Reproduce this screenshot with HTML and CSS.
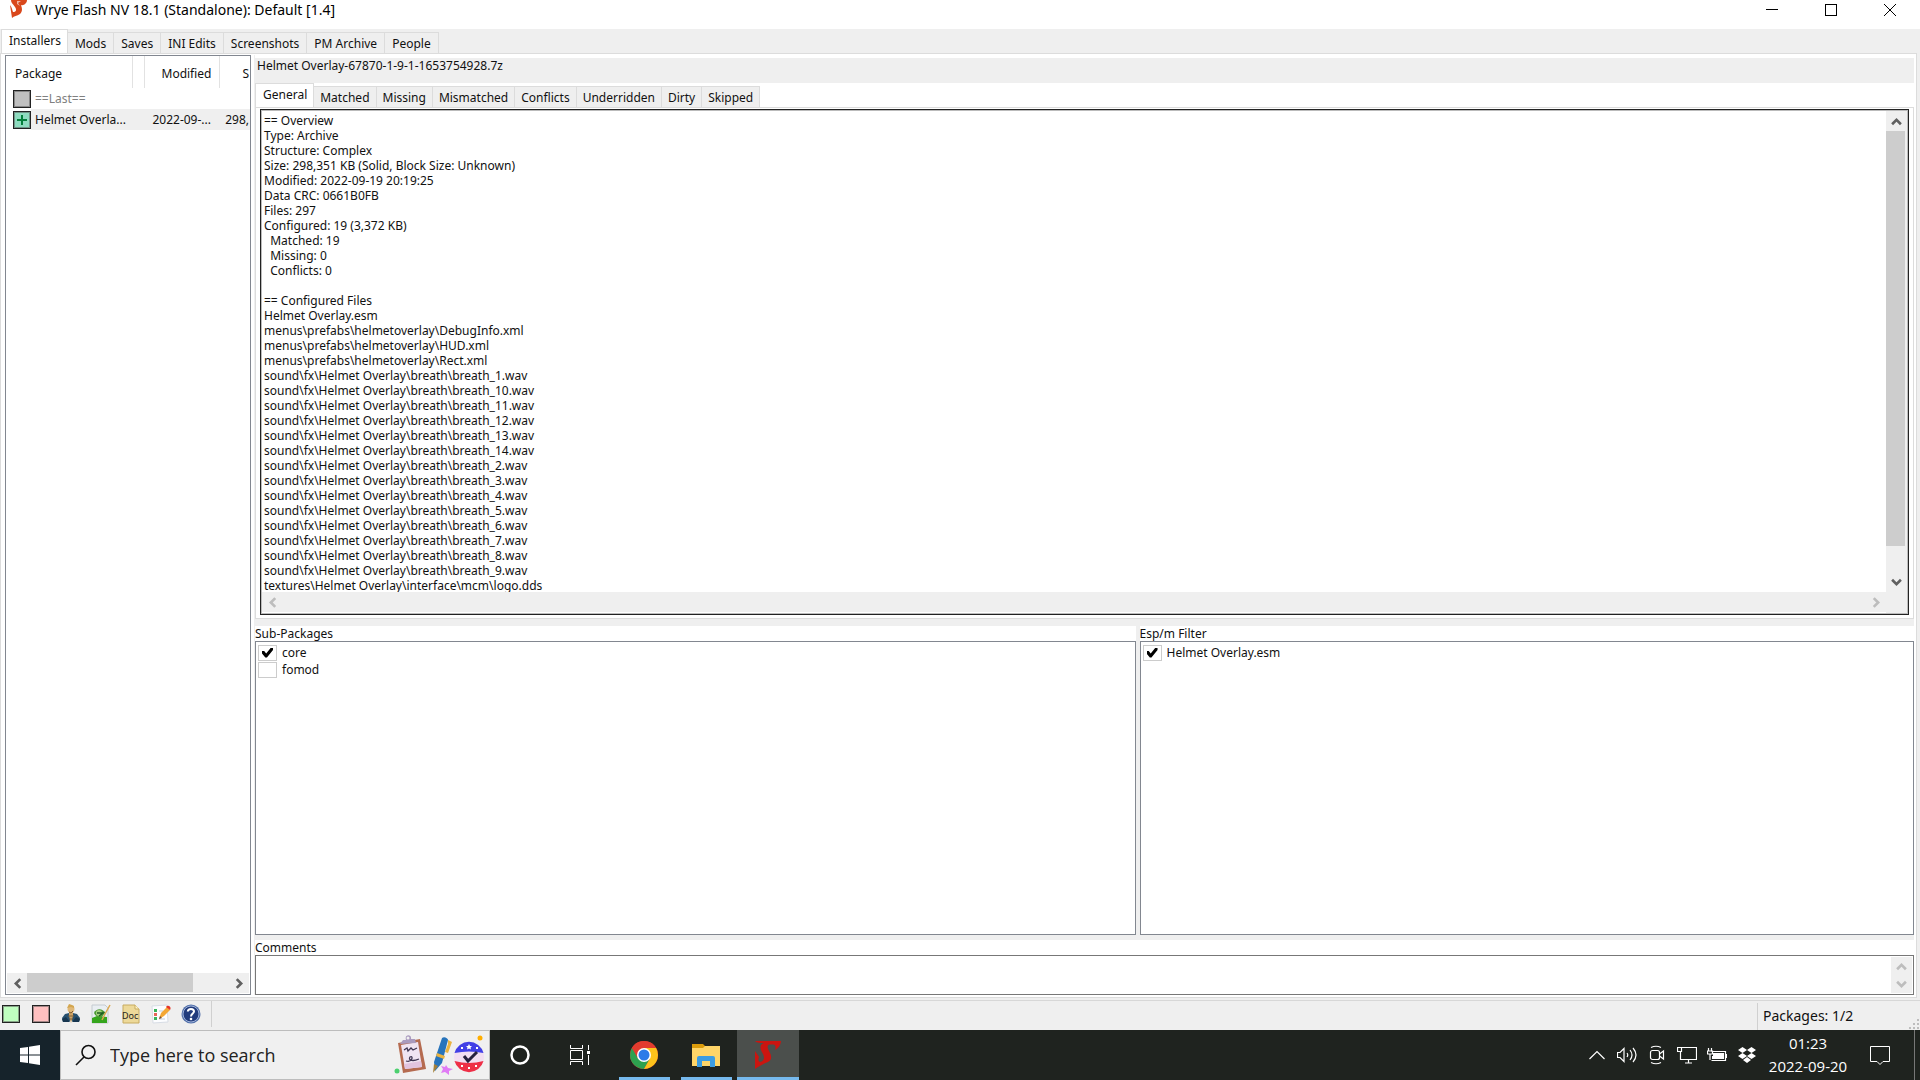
FILE: index.html
```html
<!DOCTYPE html>
<html lang="en">
<head>
<meta charset="utf-8">
<title>Wrye Flash NV 18.1 (Standalone): Default [1.4]</title>
<link rel="stylesheet" href="styles.css">
</head>
<body>
<svg class="defs" aria-hidden="true">
  <symbol id="chev-up" viewBox="0 0 10 10"><path d="M1 7.500 5 3.500 9 7.500" fill="none" stroke="currentColor" stroke-width="2.400"/></symbol>
  <symbol id="chev-down" viewBox="0 0 10 10"><path d="M1 2.500 5 6.500 9 2.500" fill="none" stroke="currentColor" stroke-width="2.400"/></symbol>
  <symbol id="chev-left" viewBox="0 0 10 10"><path d="M7.500 1 3.500 5 7.500 9" fill="none" stroke="currentColor" stroke-width="2.400"/></symbol>
  <symbol id="chev-right" viewBox="0 0 10 10"><path d="M2.500 1 6.500 5 2.500 9" fill="none" stroke="currentColor" stroke-width="2.400"/></symbol>
  <symbol id="wrye" viewBox="0 0 28 30"><path d="M1 1H27C26.500 5 25 8 21 10C22 7 22 5 19 4.500H15C13 5.500 13.500 8 15 11C18 16 18 20 14 22C9 24 5 26 1 29V11L5 17C4 19 4 21 6 22C10 21 11 18 9 14C6 9 5 5 10 3C6 3 3 3 1 1Z"/></symbol>
</svg>

<div class="app">
  <header class="titlebar">
    <svg class="title-icon" viewBox="0 0 18 18"><path fill="#d9481c" d="M1 0H17C17 3 14 6 11 5C12 8 13 11 10 14C7 16 4 16 2 18L0 5C2 7 2 10 3 12C6 12 7 10 5 7C3 4 1 3 1 0Z"/><path fill="#fff" opacity=".6" d="M7 1H11L8 3L10 6L7 4Z"/></svg>
    <h1 class="title">Wrye Flash NV 18.1 (Standalone): Default [1.4]</h1>
    <div class="window-buttons">
      <button class="wbtn" aria-label="Minimize"><svg width="12" height="12"><path d="M0 5.500H12" stroke="#000"/></svg></button>
      <button class="wbtn" aria-label="Maximize"><svg width="12" height="12"><rect x=".5" y=".5" width="11" height="11" fill="none" stroke="#000"/></svg></button>
      <button class="wbtn" aria-label="Close"><svg width="12" height="12"><path d="M0 0 12 12M12 0 0 12" stroke="#000"/></svg></button>
    </div>
  </header>

  <nav class="tabs main-tabs" role="tablist">
    <button class="tab selected" role="tab" aria-selected="true">Installers</button>
    <button class="tab" role="tab">Mods</button>
    <button class="tab" role="tab">Saves</button>
    <button class="tab" role="tab">INI Edits</button>
    <button class="tab" role="tab">Screenshots</button>
    <button class="tab" role="tab">PM Archive</button>
    <button class="tab" role="tab">People</button>
  </nav>

  <main class="workspace">
    <section class="packages">
      <table class="package-table">
        <colgroup><col class="c-name"><col class="c-order"><col class="c-date"><col class="c-size"></colgroup>
        <thead><tr><th class="left">Package</th><th></th><th>Modified</th><th class="size-head">S</th></tr></thead>
        <tbody>
          <tr class="last"><td colspan="2"><div class="pkg"><span class="swatch grey"></span><span>==Last==</span></div></td><td></td><td></td></tr>
          <tr class="current"><td colspan="2"><div class="pkg"><span class="swatch teal"><svg width="10" height="10"><path d="M5 0V10M0 5H10" stroke="#05803c" stroke-width="2"/></svg></span><span class="fill">Helmet Overla...</span></div></td><td class="num">2022-09-...</td><td class="size">298,</td></tr>
        </tbody>
      </table>
      <div class="hbar">
        <button class="sb" aria-label="Scroll left"><svg><use href="#chev-left"/></svg></button>
        <div class="htrack"><div class="hthumb"></div></div>
        <button class="sb" aria-label="Scroll right"><svg><use href="#chev-right"/></svg></button>
      </div>
    </section>

    <section class="details">
      <h2 class="archive-name">Helmet Overlay-67870-1-9-1-1653754928.7z</h2>
      <nav class="tabs sub-tabs" role="tablist">
        <button class="tab selected" role="tab" aria-selected="true">General</button>
        <button class="tab" role="tab">Matched</button>
        <button class="tab" role="tab">Missing</button>
        <button class="tab" role="tab">Mismatched</button>
        <button class="tab" role="tab">Conflicts</button>
        <button class="tab" role="tab">Underridden</button>
        <button class="tab" role="tab">Dirty</button>
        <button class="tab" role="tab">Skipped</button>
      </nav>
      <div class="info-page">
        <div class="info-box">
          <textarea class="info" readonly wrap="off" aria-label="General">== Overview
Type: Archive
Structure: Complex
Size: 298,351 KB (Solid, Block Size: Unknown)
Modified: 2022-09-19 20:19:25
Data CRC: 0661B0FB
Files: 297
Configured: 19 (3,372 KB)
  Matched: 19
  Missing: 0
  Conflicts: 0

== Configured Files
Helmet Overlay.esm
menus\prefabs\helmetoverlay\DebugInfo.xml
menus\prefabs\helmetoverlay\HUD.xml
menus\prefabs\helmetoverlay\Rect.xml
sound\fx\Helmet Overlay\breath\breath_1.wav
sound\fx\Helmet Overlay\breath\breath_10.wav
sound\fx\Helmet Overlay\breath\breath_11.wav
sound\fx\Helmet Overlay\breath\breath_12.wav
sound\fx\Helmet Overlay\breath\breath_13.wav
sound\fx\Helmet Overlay\breath\breath_14.wav
sound\fx\Helmet Overlay\breath\breath_2.wav
sound\fx\Helmet Overlay\breath\breath_3.wav
sound\fx\Helmet Overlay\breath\breath_4.wav
sound\fx\Helmet Overlay\breath\breath_5.wav
sound\fx\Helmet Overlay\breath\breath_6.wav
sound\fx\Helmet Overlay\breath\breath_7.wav
sound\fx\Helmet Overlay\breath\breath_8.wav
sound\fx\Helmet Overlay\breath\breath_9.wav
textures\Helmet Overlay\interface\mcm\logo.dds</textarea>
          <div class="vbar">
            <button class="sb" aria-label="Scroll up"><svg><use href="#chev-up"/></svg></button>
            <div class="vtrack"><div class="vthumb"></div></div>
            <button class="sb" aria-label="Scroll down"><svg><use href="#chev-down"/></svg></button>
          </div>
          <div class="hbar idle">
            <button class="sb" aria-label="Scroll left"><svg><use href="#chev-left"/></svg></button>
            <div class="htrack"></div>
            <button class="sb" aria-label="Scroll right"><svg><use href="#chev-right"/></svg></button>
          </div>
          <div class="corner"></div>
        </div>
      </div>

      <div class="lists">
        <section class="group sub-packages">
          <h3 class="caption">Sub-Packages</h3>
          <div class="checklist">
            <label class="check"><input type="checkbox" checked><span>core</span></label>
            <label class="check"><input type="checkbox"><span>fomod</span></label>
          </div>
        </section>
        <section class="group filter">
          <h3 class="caption">Esp/m Filter</h3>
          <div class="checklist">
            <label class="check"><input type="checkbox" checked><span>Helmet Overlay.esm</span></label>
          </div>
        </section>
      </div>

      <div class="comments">
        <label class="caption" for="comments">Comments</label>
        <div class="comment-box">
          <textarea class="comment-text" id="comments"></textarea>
          <div class="vbar idle">
            <button class="sb" aria-label="Scroll up"><svg><use href="#chev-up"/></svg></button>
            <button class="sb" aria-label="Scroll down"><svg><use href="#chev-down"/></svg></button>
          </div>
        </div>
      </div>
    </section>
  </main>

  <footer class="statusbar">
    <div class="tools">
      <button class="tool" aria-label="Auto-quit on"><span class="swatch green"></span></button>
      <button class="tool" aria-label="Auto-quit off"><span class="swatch pink"></span></button>
      <button class="tool" aria-label="Launch game"><svg viewBox="0 0 20 20"><path d="M1 14 4 10 8 9H12L16 10 19 14 18 18H13L10 16 7 18H2Z" fill="#27506f"/><path d="M1 15 5 13 9 18H2ZM19 15 15 13 11 18H18Z" fill="#173650"/><path d="M8 8H12V12L10 19 8 12Z" fill="#cfa465"/><circle cx="10" cy="5" r="3.500" fill="#e0b878"/><path d="M6 4 8 0 11 1 13 2 13 4 10 3Z" fill="#d3a64f"/><path d="M8 8 10 9 12 7" stroke="#7c5730" fill="none"/><path d="M7 12H13M8 15H12" stroke="#7d5f3a"/></svg></button>
      <button class="tool" aria-label="Image editor"><svg viewBox="0 0 20 20"><path d="M1 1H14L17 4V19H1Z" fill="#e9eef2" stroke="#c5cad0"/><path d="M1 14 6 12 16 13V19H1Z" fill="#35a51c"/><path d="M3 9C5 4 12 4 14 9L10 14C7 13 4 12 3 9Z" fill="#4d9a35"/><circle cx="8" cy="9" r="3" fill="#a5d37f"/><path d="M6 9H12L8 12" stroke="#1c5c21" fill="none" stroke-width="1.500"/><path d="M19 1 14 10 11 16" stroke="#dda84e" stroke-width="1.500" fill="none"/></svg></button>
      <button class="tool" aria-label="Doc browser"><svg viewBox="0 0 20 20"><path d="M2 1H14L18 5V19H2Z" fill="#edd999" stroke="#c7ab61"/><path d="M14 1V5H18" fill="#fff4c8" stroke="#c7ab61"/><text x="1" y="15" class="doc-text">Doc</text></svg></button>
      <button class="tool" aria-label="Mod checker"><svg viewBox="0 0 20 20"><path d="M1 2 16 1 17 18 2 19Z" fill="#fcfdff" stroke="#d8dde5"/><path d="M3 5H6V8H3ZM3 13H6V16H3Z" fill="#39b45a"/><path d="M3 9H6V12H3Z" fill="#e66657"/><path d="M8 7H12M8 15H14" stroke="#c1cede"/><path d="M8 15 10 9 16 3 19 6 13 12Z" fill="#f3a735"/><path d="M15 3C17 0 21 3 19 6Z" fill="#e93325"/><path d="M8 15 9 12 11 14Z" fill="#745136"/></svg></button>
      <button class="tool" aria-label="Help"><svg viewBox="0 0 20 20"><circle cx="10" cy="10" r="9.500" fill="#5270aa"/><circle cx="10" cy="10" r="8" fill="#223c7d" stroke="#a1b4da"/><path d="M6.800 7.500C7 4 13 4 13 7.500C13 9.500 10 9.500 10 12.500" stroke="#fff" stroke-width="2" fill="none"/><circle cx="10" cy="15" r="1.300" fill="#fff"/></svg></button>
    </div>
    <div class="status-text">Packages: 1/2</div>
    <svg class="grip" width="12" height="12" fill="#bdbdbd"><path d="M9 1h2v2h-2zM5 5h2v2h-2zM9 5h2v2h-2zM1 9h2v2h-2zM5 9h2v2h-2zM9 9h2v2h-2z"/></svg>
  </footer>
</div>

<footer class="taskbar">
  <button class="start" aria-label="Start"><svg width="20" height="20" fill="#fff"><path d="M0 3 8 2V9.500H0ZM9 1.800 20 0V9.500H9ZM0 10.500H8V18L0 17ZM9 10.500H20V20L9 18.200Z"/></svg></button>
  <div class="search">
    <svg class="lens" width="22" height="22" fill="none" stroke="#111" stroke-width="1.600"><circle cx="13.500" cy="8" r="6.500"/><path d="M9 13 1 21"/></svg>
    <input class="search-input" type="text" placeholder="Type here to search" aria-label="Type here to search">
    <svg class="doodle" viewBox="0 0 90 40">
      <path d="M4 8 26 4 32 34 9 38Z" fill="#b56b50"/><path d="M7 10 24 7 28 32 11 34Z" fill="#f0e4f3"/><path d="M27 26 28 32 11 34 10 29Z" fill="#e2c4df"/>
      <path d="M6 9 9 5 12 5C10-1 18-1 17 4L21 4 22 8Z" fill="#a99abe"/><circle cx="14" cy="3" r="1.500" fill="#f0f0f0"/>
      <path d="M10 15 13 13 14 16 17 13 19 15 23 13M12 26C18 28 20 20 16 22C14 25 18 27 25 24" fill="none" stroke="#3e3552" stroke-width="1.300"/>
      <circle cx="3" cy="36" r="2.500" fill="#4cd06f"/>
      <path d="M48 3C50 1 54 3 54 5L48 28 41 36 40 27Z" fill="#2874bb"/><path d="M54 5 58 7 54 18 51 17 54 9ZM43 18 51 21 50 24 42 21Z" fill="#e9b341"/><path d="M40 29 44 31 39 38Z" fill="#a58039"/>
      <path d="M52 30 54 33 59 34 55 36 55 40 51 37 47 38 49 34 47 31 51 32Z" fill="#e07bf5"/>
      <circle cx="75" cy="22" r="15" fill="#f2def1"/><path d="M60.500 18A15 15 0 0 1 89.500 18Q75 15 60.500 18Z" fill="#4240e6"/><path d="M60.500 26A15 15 0 0 0 89.500 26Q75 30 60.500 26Z" fill="#ee2f46"/>
      <path d="m75 9 1 2h2l-1.500 1.500.5 2-2-1-2 1 .5-2L72 11h2ZM67 12h2v2h-2ZM82 12h2v2h-2ZM67 30h2v2h-2ZM74 32h2v2h-2ZM81 30h2v2h-2Z" fill="#fff"/>
      <path d="M70 21 74 26 83 17" stroke="#27213e" stroke-width="3" fill="none"/><circle cx="86" cy="3" r="2.500" fill="#ffae00"/>
    </svg>
  </div>
  <div class="pinned">
    <button class="cortana" aria-label="Cortana"><svg width="20" height="20"><circle cx="10" cy="10" r="8.500" fill="none" stroke="#fff" stroke-width="2.500"/></svg></button>
    <button class="cortana" aria-label="Task View"><svg width="20" height="20" fill="none" stroke="#fff"><path d="M.5 0V3.500H12.500V0M.5 20V16.500H12.500V20M.5 5.500H12.500V14.500H.5ZM18.500 0V5M18.500 10V20"/><path d="M17 6H20V9H17Z" fill="#fff" stroke="none"/></svg></button>
  </div>
  <div class="running">
    <button class="run" aria-label="Chrome"><svg width="28" height="28" viewBox="0 0 28 28"><circle cx="14" cy="14" r="14" fill="#e33b2e"/><path d="M1.900 7A14 14 0 0 0 14 28L20 17.500 14 14Z" fill="#2da14f"/><path d="M26.100 7A14 14 0 0 1 14 28L20 17.500 14 7Z" fill="#fcc21b"/><path d="M14 0A14 14 0 0 1 26.100 7H14V14L8 17.500 1.900 7A14 14 0 0 1 14 0Z" fill="#e33b2e"/><circle cx="14" cy="14" r="7" fill="#fff"/><circle cx="14" cy="14" r="5.500" fill="#2c7be8"/></svg></button>
    <button class="run" aria-label="File Explorer"><svg width="28" height="24" viewBox="0 0 28 24"><path d="M0 1H11L13 3V8H0Z" fill="#dc9c0b"/><path d="M0 5H11L13 3H28V23H0Z" fill="#ffd568"/><path d="M5 24V15Q5 13 7 13H21Q23 13 23 15V24H18V18H10V24Z" fill="#3c9ce2"/></svg></button>
    <button class="run active" aria-label="Wrye Flash"><svg width="28" height="30" fill="#cb1510"><use href="#wrye"/></svg></button>
  </div>
  <div class="tray">
    <button class="tray-btn" aria-label="Show hidden icons"><svg><path d="M2.500 14 10 6.500 17.500 14"/></svg></button>
    <button class="tray-btn" aria-label="Volume"><svg><path d="M.5 7.500H3L7 3.500V16.500L3 12.500H.5ZM10 8Q11.500 10 10 12M13 5Q17 10 13 15M16 3Q22 10 16 17"/></svg></button>
    <button class="tray-btn" aria-label="Camera"><svg><rect x="3.500" y="5.500" width="9" height="9" rx="2"/><path d="M12.500 9 16.500 6V14L12.500 11M4 2.500Q9 0 14 2.500M4 17.500Q9 20 14 17.500"/></svg></button>
    <button class="tray-btn" aria-label="Network"><svg><path d="M5 2.500H19.500V14.500H3.500V7M11.500 14.500V18M8 18H15M.5 2.500H4.500V6.500H.5Z"/></svg></button>
    <button class="tray-btn" aria-label="Battery"><svg><path d="M4.500 6.500H18.500V15.500H4.500M19.500 9V13M1.500 3V6M4.500 3V6M.5 6H5.500V9H.5ZM3 9V15"/><path d="M6 8H17V14H5V11H6Z" fill="#fff" stroke="none"/></svg></button>
    <button class="tray-btn" aria-label="Dropbox"><svg><path d="m5.500 2 4.500 3-4.500 3L1 5Zm9 0L19 5l-4.500 3L10 5Zm-9 6 4.500 3-4.500 3L1 11Zm9 0 4.500 3-4.500 3-4.500-3ZM10 12l4 3-4 3-4-3Z" fill="#fff" stroke="none"/></svg></button>
  </div>
  <div class="clock"><time>01:23</time><time>2022-09-20</time></div>
  <button class="action" aria-label="Notifications"><svg width="20" height="20" fill="none" stroke="#fff"><path d="M.5 1.500H19.500V16.500H13L10 19.500 7 16.500H.5Z"/></svg></button>
  <button class="peek" aria-label="Show desktop"></button>
</footer>
</body>
</html>
```
FILE: styles.css
```css
* { box-sizing: border-box; }
body {
  margin: 0;
  height: 100vh;
  display: flex;
  flex-direction: column;
  overflow: hidden;
  background: #efefef;
  color: #111;
  font: 12px/15px "Noto Sans", "Open Sans", sans-serif;
}
button, input, textarea { font: inherit; color: inherit; border: 0; padding: 0; margin: 0; background: none; border-radius: 0; }
h1, h2, h3 { margin: 0; font: inherit; }
svg { display: block; }
.defs { width: 0; height: 0; flex: none; position: absolute; }
.app { flex: 1; min-height: 0; display: flex; flex-direction: column; }

/* Title bar */
.titlebar { height: 29px; display: flex; background: #fff; color: #000; }
.title-icon { width: 18px; height: 18px; margin-left: 10px; }
.title { margin-left: 7px; font-size: 14px; line-height: 20px; }
.window-buttons { margin-left: auto; padding-right: 1px; display: flex; }
.wbtn { width: 59px; height: 20px; display: grid; place-items: center; }

/* Tab strips */
.tabs { display: flex; align-items: flex-end; height: 24px; flex: none; }
.tab {
  height: 21px;
  padding: 0 6px;
  border: 1px solid #dcdcdc;
  border-left-width: 0;
  border-bottom: 0;
  background: #efefef;
}
.tab.selected { height: 24px; padding: 0 6px 3px 7px; background: #fff; border-left-width: 1px; }
.main-tabs { padding-left: 1px; }
.main-tabs .tab:not(.selected) { padding: 0 7px; }

/* Workspace */
.workspace {
  flex: 1;
  min-height: 0;
  display: flex;
  margin-right: 3px;
  padding: 1px 2px 2px 4px;
  background: #fff;
  border: 1px solid #dcdcdc;
}
.packages { width: 246px; flex: none; border: 1px solid #828790; display: flex; flex-direction: column; }
.package-table { table-layout: fixed; width: 100%; border-collapse: collapse; white-space: nowrap; }
.c-name { width: 126px; }
.c-order { width: 12px; }
.c-date { width: 75px; }
.package-table th { height: 32px; padding: 2px 7px 0; font-weight: 400; text-align: right; border-right: 1px solid #e2e2e2; }
.package-table th.left { text-align: left; padding-left: 9px; }
.package-table .size-head { border-right: 0; padding-right: 1px; }
.package-table td { height: 21px; padding: 0; }
.pkg { display: flex; align-items: center; padding-left: 7px; }
.pkg span:last-child { flex: 1; padding-left: 4px; line-height: 21px; }
.last { color: #808080; }
.current td.num, .current td.size, .pkg .fill { background: #efefef; }
.num { text-align: right; }
.package-table td.num { padding-right: 8px; }
.package-table td.size { padding-right: 1px; text-align: right; }
.swatch { width: 18px; height: 18px; border: 1px solid #222; display: grid; place-items: center; flex: none; box-shadow: inset 0 0 0 1px #5558; }
.grey { background: #c0c0c0; }
.teal { background: #8edcc0; }
.green { background: #c0ffc0; }
.pink { background: #ffc0c0; }

/* Scroll bars */
.hbar { height: 20px; display: flex; background: #efefef; }
.packages .hbar { margin: auto 1px 1px; }
.vbar { width: 21px; display: flex; flex-direction: column; background: #efefef; }
.sb { width: 20px; height: 20px; flex: none; display: grid; place-items: center; color: #606060; }
.sb svg { width: 11px; height: 11px; }
.idle .sb { color: #bdbdbd; }
.htrack { flex: 1; }
.hthumb { width: 82%; height: 19px; background: #cdcdcd; }
.vtrack { flex: 1; }
.vthumb { width: 19px; height: 94%; background: #cdcdcd; }
.corner { background: #efefef; }

/* Details */
.details { flex: 1; min-width: 0; margin-left: 3px; display: flex; flex-direction: column; border-left: 1px solid #efefef; }
.archive-name { height: 25px; margin-top: 3px; padding: 0 2px; background: #efefef; flex: none; }
.info-page { flex: 516; min-height: 0; display: flex; padding: 1px 4px 3px; border: 1px solid #dcdcdc; }
.info-box { flex: 1; display: grid; grid-template: minmax(0, 1fr) 21px / minmax(0, 1fr) 21px; border: 1px solid #222; box-shadow: inset 0 0 0 1px #bbb; padding: 1px; }
.info { resize: none; overflow: hidden; padding: 2px; outline: 0; white-space: pre; background: none; }
.lists { flex: 315; min-height: 0; display: flex; gap: 4px; background: #efefef; padding-top: 7px; }
.group { display: flex; flex-direction: column; background: #fff; min-width: 0; }
.sub-packages { flex: 880; }
.filter { flex: 774; }
.caption { display: block; height: 15px; flex: none; }
.checklist { flex: 1; border: 1px solid #828790; padding: 2px; }
.check { display: flex; align-items: center; height: 17px; gap: 5px; }
.check input { appearance: none; width: 19px; height: 16px; border: 1px solid #ccc; background: #fff; display: grid; place-items: center; }
.check input:checked::before { content: ""; width: 11px; height: 10px; background: #000; clip-path: polygon(0 35%, 20% 35%, 38% 60%, 82% 0, 100% 0, 100% 25%, 45% 100%, 30% 100%, 0 60%); }
.comments { flex: none; border-top: 5px solid #efefef; }
.comment-box { display: flex; height: 40px; border: 1px solid #777; padding: 1px; }
.comment-text { flex: 1; resize: none; outline: 0; }
.comment-box .vbar .sb { height: 18px; }

/* Status bar */
.statusbar { height: 30px; margin-top: 2px; border-top: 1px solid #d7d7d7; display: flex; flex: none; }
.tools { flex: 1; display: flex; align-items: center; gap: 10px; padding: 0 0 3px 1px; }
.tool { width: 20px; height: 20px; display: grid; place-items: center; }
.tool svg { width: 20px; height: 20px; }
.tools::after { content: ""; width: 1px; height: 26px; background: #d0d0d0; }
.doc-text { font: 9px "Noto Sans", sans-serif; fill: #222; }
.status-text { width: 151px; margin-top: 2px; padding-left: 5px; border-left: 1px solid #d0d0d0; font-size: 14px; line-height: 26px; }
.grip { align-self: flex-end; }

/* Taskbar */
.taskbar { height: 50px; flex: none; display: flex; background: #1f231f; color: #fff; font-family: "Open Sans", "Noto Sans", sans-serif; }
.start { width: 60px; background: #16232b; display: grid; place-items: center; }
.search { width: 430px; display: flex; align-items: center; padding: 0 5px 0 14px; border: 1px solid #bdbdbd; background: #f0f0f0; }
.lens { flex: none; }
.search-input { flex: 1; min-width: 0; padding-left: 13px; font-size: 18px; line-height: 24px; }
.search-input::placeholder { color: #222; opacity: 1; }
.doodle { width: 90px; height: 40px; flex: none; }
.pinned, .running { display: flex; }
.cortana { width: 60px; display: grid; place-items: center; }
.running { padding-left: 3px; }
.run { width: 62px; display: grid; place-items: center; background: linear-gradient(#76b9ed, #76b9ed) bottom / 51px 3px no-repeat; }
.run.active { background-color: #4b4f4c; background-size: 100% 3px; }
.tray { margin-left: auto; display: flex; }
.tray-btn { width: 30px; display: grid; place-items: center; }
.tray-btn svg { width: 20px; height: 20px; fill: none; stroke: #fff; stroke-width: 1.2; }
.clock { width: 92px; display: flex; flex-direction: column; align-items: center; font-size: 15px; line-height: 23px; padding-top: 2px; }
.action { width: 52px; display: grid; place-items: center; }
.peek { width: 14px; }
.peek::before { content: ""; display: block; width: 1px; height: 50px; margin-left: 8px; background: #777; }
```
